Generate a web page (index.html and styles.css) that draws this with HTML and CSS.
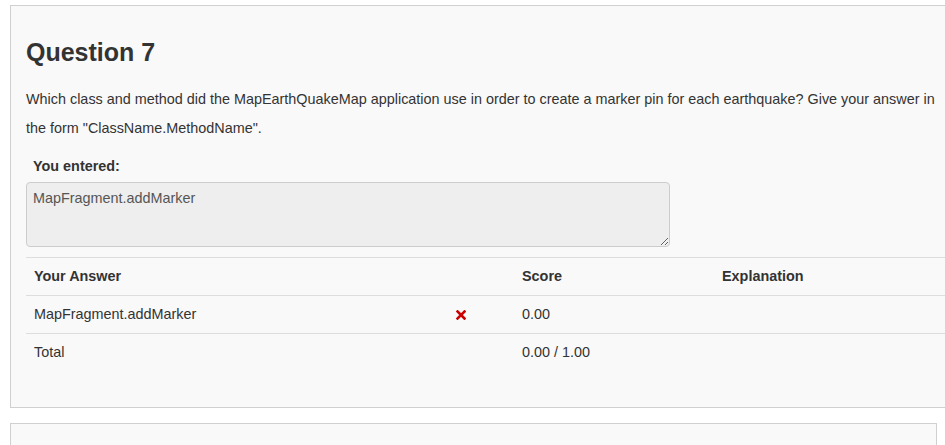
FILE: index.html
```html
<!DOCTYPE html>
<html>
<head>
<meta charset="utf-8">
<link rel="stylesheet" href="styles.css">
</head>
<body>
<div class="page">
  <section class="panel">
    <h2 class="q-title">Question 7</h2>
    <p class="q-text">Which class and method did the MapEarthQuakeMap application use in order to create a marker pin for each earthquake? Give your answer in the form "ClassName.MethodName".</p>
    <div class="entered">
      <div class="entered-label">You entered:</div>
      <textarea class="entered-box" readonly>MapFragment.addMarker</textarea>
    </div>
    <table class="results">
      <thead>
        <tr>
          <th class="c-answer">Your Answer</th>
          <th class="c-icon"></th>
          <th class="c-score">Score</th>
          <th class="c-expl">Explanation</th>
        </tr>
      </thead>
      <tbody>
        <tr>
          <td>MapFragment.addMarker</td>
          <td class="icon-cell"><svg class="wrong" width="10" height="10" viewBox="0 0 10 10"><path d="M1.5 1.5 L8.5 8.5 M8.5 1.5 L1.5 8.5" stroke="#c00" stroke-width="2.6" stroke-linecap="square"/></svg></td>
          <td>0.00</td>
          <td></td>
        </tr>
        <tr>
          <td>Total</td>
          <td></td>
          <td>0.00 / 1.00</td>
          <td></td>
        </tr>
      </tbody>
    </table>
  </section>
  <section class="panel panel-next"></section>
</div>
</body>
</html>
```

FILE: styles.css
```css
html, body {
  margin: 0;
  padding: 0;
  background: #fff;
  overflow: hidden;
}
body {
  font-family: "Liberation Sans", Arial, sans-serif;
  font-size: 14.4px;
  color: #333;
}
.page {
  padding: 5px 0 0 10px;
  width: 1000px;
}
.panel {
  background: #f9f9f9;
  border: 1px solid #d0d0d0;
  padding: 0 15px 36px 15px;
  width: 925px;
}
.panel-next {
  margin-top: 15px;
  height: 60px;
  padding: 0;
}
.q-title {
  margin: 0;
  padding-top: 31px;
  font-size: 25px;
  font-weight: bold;
  line-height: 30px;
}
.q-text {
  margin: 18px 0 0 0;
  line-height: 29px;
}
.entered {
  margin-top: 13px;
}
.entered-label {
  font-weight: bold;
  padding-left: 7px;
  line-height: 20px;
}
.entered-box {
  display: block;
  margin-top: 6px;
  box-sizing: border-box;
  width: 644px;
  height: 65px;
  background: #eee;
  border: 1px solid #ccc;
  border-radius: 4px;
  padding: 5px 6px;
  font-family: "Liberation Sans", Arial, sans-serif;
  font-size: 14.4px;
  color: #555;
  line-height: 20px;
  outline: none;
}
.results {
  margin-top: 10px;
  border-collapse: collapse;
  width: 1000px;
}
.results th, .results td {
  text-align: left;
  padding: 8px;
  line-height: 21px;
  border-top: 1px solid #ddd;
}
.c-answer { width: 406px; }
.c-icon { width: 50px; }
.c-score { width: 184px; }
.icon-cell {
  padding-left: 4px;
}
.wrong {
  display: block;
}
```
